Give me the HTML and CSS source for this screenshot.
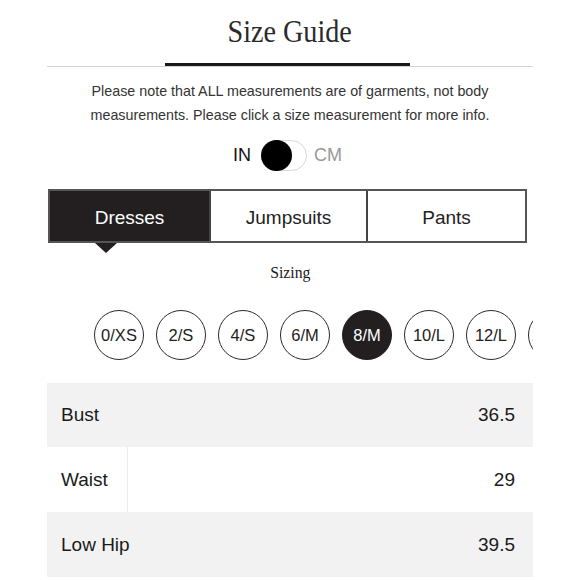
FILE: index.html
```html
<!DOCTYPE html>
<html lang="en">
<head>
<meta charset="utf-8">
<title>Size Guide</title>
<link rel="stylesheet" href="styles.css">
</head>
<body>
<div class="page">
  <h1 class="title"><span class="title-text">Size Guide</span></h1>
  <div class="rule"><div class="rule-bar"></div></div>
  <p class="note">Please note that ALL measurements are of garments, not body measurements. Please click a size measurement for more info.</p>
  <div class="units">
    <span class="unit unit-on">IN</span>
    <span class="switch"><span class="knob"></span></span>
    <span class="unit unit-off">CM</span>
  </div>
  <div class="tabs">
    <div class="tab tab-active">Dresses<span class="pointer"></span></div>
    <div class="tab">Jumpsuits</div>
    <div class="tab">Pants</div>
  </div>
  <div class="sizing-label"><span class="sizing-text">Sizing</span></div>
  <div class="sizes">
    <div class="size">0/XS</div>
    <div class="size">2/S</div>
    <div class="size">4/S</div>
    <div class="size">6/M</div>
    <div class="size size-active">8/M</div>
    <div class="size">10/L</div>
    <div class="size">12/L</div>
    <div class="size size-last">14/XL</div>
  </div>
  <div class="table">
    <div class="row row-shade"><div class="label">Bust</div><div class="value">36.5</div></div>
    <div class="row"><div class="label">Waist</div><div class="value">29</div></div>
    <div class="row row-shade"><div class="label">Low Hip</div><div class="value">39.5</div></div>
  </div>
</div>
</body>
</html>
```

FILE: styles.css
```css
html, body {
  margin: 0;
  padding: 0;
  background: #ffffff;
}
body {
  width: 580px;
  height: 580px;
  overflow: hidden;
  font-family: "Liberation Sans", Arial, sans-serif;
  color: #222;
}
.page {
  margin-left: 47px;
  width: 486px;
}
.title {
  margin: 0 0 16px;
  padding-top: 16px;
  line-height: 31px;
  height: 31px;
  text-align: center;
  font-family: "Liberation Serif", "Times New Roman", serif;
  font-weight: normal;
  font-size: 32px;
  color: #2a2a2a;
}
.title-text {
  display: inline-block;
  transform: scaleX(0.88);
}
.rule {
  height: 3px;
  border-bottom: 1px solid #d4d4d4;
  display: flex;
  justify-content: center;
}
.rule-bar {
  width: 245px;
  height: 3px;
  background: #1a1a1a;
  margin-left: -5px;
}
.note {
  margin: 12px 0 0;
  font-size: 14.3px;
  line-height: 24px;
  text-align: center;
  color: #333;
}
.units {
  margin-top: 13px;
  height: 31px;
  display: flex;
  align-items: center;
  justify-content: center;
  margin-left: -5px;
}
.unit {
  font-size: 18px;
  line-height: 31px;
}
.unit-on {
  color: #111;
  margin-right: 10px;
}
.unit-off {
  color: #999;
  margin-left: 7px;
}
.switch {
  width: 46px;
  height: 31px;
  box-sizing: border-box;
  border: 1px solid #d8d8d8;
  border-radius: 16px;
  display: flex;
  align-items: center;
}
.knob {
  width: 31px;
  height: 31px;
  border-radius: 50%;
  background: #000;
  margin-left: -1px;
}
.tabs {
  margin: 18px 0 0 1px;
  width: 479px;
  height: 54px;
  box-sizing: border-box;
  border: 2px solid #555;
  display: grid;
  grid-template-columns: 159px 157px 1fr;
}
.tab {
  position: relative;
  display: flex;
  align-items: center;
  justify-content: center;
  padding-top: 3px;
  font-size: 19px;
  color: #222;
  border-left: 2px solid #444;
}
.tab:first-child {
  border-left: none;
}
.tab-active {
  background: #231f20;
  color: #fff;
}
.pointer {
  position: absolute;
  left: 45px;
  top: 52px;
  width: 0;
  height: 0;
  border-left: 11px solid transparent;
  border-right: 11px solid transparent;
  border-top: 10px solid #231f20;
}
.sizing-label {
  margin-top: 19px;
  height: 20px;
  line-height: 20px;
  text-align: center;
  font-family: "Liberation Serif", "Times New Roman", serif;
  font-size: 17.5px;
  color: #1a1a1a;
}
.sizing-text {
  display: inline-block;
  transform: scaleX(0.9);
}
.sizes {
  margin-top: 28px;
  height: 50px;
  display: flex;
  gap: 12px;
  padding-left: 47px;
  overflow: hidden;
}
.size {
  flex: 0 0 50px;
  height: 50px;
  box-sizing: border-box;
  border: 1.5px solid #2a2a2a;
  border-radius: 50%;
  display: flex;
  align-items: center;
  justify-content: center;
  font-size: 16.5px;
  color: #222;
  white-space: nowrap;
}
.size-active {
  background: #231f20;
  border-color: #231f20;
  color: #fff;
}
.table {
  margin-top: 23px;
}
.row {
  display: flex;
  height: 65px;
  font-size: 19px;
  color: #1a1a1a;
}
.row:first-child {
  height: 64px;
}
.row-shade {
  background: #f2f2f2;
}
.label {
  width: 81px;
  box-sizing: border-box;
  padding-left: 14px;
  display: flex;
  align-items: center;
  border-right: 1px solid #ececec;
  white-space: nowrap;
}
.row-shade .label {
  border-right-color: #f2f2f2;
}
.value {
  flex: 1;
  display: flex;
  align-items: center;
  justify-content: flex-end;
  padding-right: 18px;
}
```
